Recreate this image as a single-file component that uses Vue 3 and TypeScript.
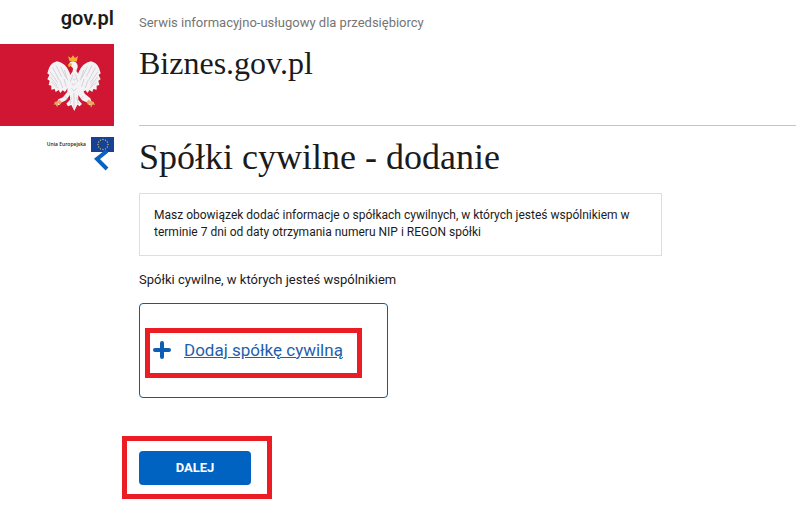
<script setup lang="ts">
const title = 'Spółki cywilne - dodanie'

// Centres of the twelve stars on the European flag
const stars = Array.from({ length: 12 }, (_, i) => {
  const angle = (i * Math.PI) / 6
  return { x: 12 + 5 * Math.sin(angle), y: 7.5 - 5 * Math.cos(angle) }
})
</script>

<template>
  <div class="page">
    <aside class="side">
      <a class="brand" href="#">gov.pl</a>
      <div class="emblem">
        <svg class="eagle" viewBox="21 15 162 171" role="img" aria-label="Godło Polski">
          <g fill="#f3f2f4">
            <path d="M94 96 L89 68 Q76 38 51 34 Q34 38 27 54 L22 70 L28 75 L22 88 L29 92 L26 105 L34 107 L34 119 L44 117 L47 126 L56 120 L61 129 L68 121 L75 126 L83 114 L90 120 Z" />
            <path d="M110 96 L115 68 Q128 38 153 34 Q170 38 177 54 L182 70 L176 75 L182 88 L175 92 L178 105 L170 107 L170 119 L160 117 L157 126 L148 120 L143 129 L136 121 L129 126 L121 114 L114 120 Z" />
            <path d="M87 44 Q88 33 101 34 Q114 38 113 52 L109 63 L121 80 L123 111 L135 132 L151 145 L158 164 L149 166 L143 158 L126 151 L115 135 L115 149 L126 162 L119 169 L112 164 L103 183 L94 165 L84 169 L79 161 L90 149 L90 135 L78 151 L63 158 L57 166 L48 162 L55 148 L69 142 L82 125 L82 87 L98 64 L99 55 L93 49 Z" />
          </g>
          <g fill="none" stroke="#c6c2c9" stroke-width="2">
            <path d="M48 46 L65 80 M38 53 L58 91 M30 65 L53 98 M31 81 L52 107 M34 96 L55 115 M62 50 L78 83 M73 60 L83 91 M60 91 L68 114 M72 87 L79 110" />
            <path d="M156 46 L139 80 M166 53 L146 91 M174 65 L151 98 M173 81 L152 107 M170 96 L149 115 M142 50 L126 83 M131 60 L121 91 M144 91 L136 114 M132 87 L125 110" />
            <path d="M99 73 L91 96 M106 73 L114 96 M99 85 L103 91 L108 85 M95 99 L100 106 L107 99 M95 115 L102 123 L110 115 M102 129 V174 M94 141 L91 161 M110 141 L115 161 M74 139 L82 146 M130 139 L122 146" />
          </g>
          <g fill="#f4ad32">
            <path d="M89 34 L84 19 L93 24 L99 16 L105 24 L114 18 L110 35 Q100 31 89 34 Z" />
            <path d="M84 43 L94 39 L96 46 L86 52 Z" />
          </g>
          <g fill="#eda758">
            <path d="M58 149 L65 155 L60 164 L54 160 L52 172 L46 163 L41 165 L45 155 L53 154 Z" />
            <path d="M146 149 L140 155 L144 165 L150 161 L153 173 L158 163 L165 166 L161 155 L153 154 Z" />
          </g>
        </svg>
      </div>
      <div class="union">
        <span>Unia Europejska</span>
        <svg class="eu" viewBox="0 0 23 15" aria-hidden="true">
          <rect width="23" height="15" fill="#164194" />
          <circle v-for="(s, i) in stars" :key="i" :cx="s.x" :cy="s.y" r=".65" fill="#c9c96c" />
        </svg>
      </div>
      <button class="back" type="button" aria-label="Wstecz">
        <svg viewBox="0 0 16 22" aria-hidden="true">
          <path d="M13 2 L3 10 L13 20" fill="none" stroke="#0863bd" stroke-width="4" />
        </svg>
      </button>
    </aside>

    <div class="content">
      <header class="header">
        <p class="tagline">Serwis informacyjno-usługowy dla przedsiębiorcy</p>
        <a class="site" href="#">Biznes.gov.pl</a>
      </header>
      <main>
        <h1>{{ title }}</h1>
        <p class="notice">
          Masz obowiązek dodać informacje o spółkach cywilnych, w których jesteś wspólnikiem w
          terminie 7 dni od daty otrzymania numeru NIP i REGON spółki
        </p>
        <h2>Spółki cywilne, w których jesteś wspólnikiem</h2>
        <div class="card">
          <a class="add" href="#">
            <svg viewBox="0 0 18 18" aria-hidden="true">
              <path d="M9 2 V16 M2 9 H16" fill="none" stroke="#0e5db5" stroke-width="4" stroke-linecap="round" />
            </svg>
            <span>Dodaj spółkę cywilną</span>
          </a>
        </div>
        <div class="actions">
          <button class="next" type="button">DALEJ</button>
        </div>
      </main>
    </div>
  </div>
</template>

<style>
body {
  background: #fff;
}
</style>

<style scoped>
.page {
  display: grid;
  grid-template-columns: 114px minmax(0, 1fr);
  column-gap: 25px;
  padding-bottom: 32px;
  font-family: Roboto, "Liberation Sans", sans-serif;
  color: #1b1b1b;
}
.side {
  display: flex;
  flex-direction: column;
}
.brand {
  height: 44px;
  padding-top: 6px;
  box-sizing: border-box;
  text-align: right;
  font-size: 20px;
  line-height: 24px;
  font-weight: 600;
  color: inherit;
  text-decoration: none;
}
.emblem {
  display: flex;
  justify-content: flex-end;
  padding: 11px 13px 14px 0;
  background: #d01632;
}
.eagle {
  width: 54px;
  height: 57px;
}
.union {
  display: flex;
  justify-content: flex-end;
  align-items: center;
  gap: 5px;
  margin-top: 11px;
  font-family: "Open Sans", sans-serif;
  font-size: 5px;
  font-weight: 600;
  line-height: 15px;
}
.eu {
  width: 23px;
  height: 15px;
}
.back {
  position: relative;
  align-self: flex-end;
  display: flex;
  margin: -3px 4px 0 0;
  padding: 0;
  border: 0;
  background: none;
}
.back svg {
  width: 16px;
  height: 22px;
}
.header {
  height: 125px;
  border-bottom: 1px solid #c6c6c6;
}
.tagline {
  margin: 0;
  padding: 15px 0 20px;
  font-size: 13px;
  line-height: 16px;
  color: #757575;
}
.site,
h1 {
  font-family: "Liberation Serif", serif;
  font-weight: 400;
  color: #1b1b1b;
}
.site {
  font-size: 32px;
  line-height: 24px;
  text-decoration: none;
}
h1 {
  margin: 10px 0 15px;
  font-size: 36px;
  line-height: 42px;
}
.notice {
  max-width: 523px;
  margin: 0 0 16px;
  padding: 13px 14px 14px;
  box-sizing: border-box;
  border: 1px solid #dedede;
  font-size: 12px;
  line-height: 17px;
}
h2 {
  margin: 0 0 15px;
  font-size: 13px;
  line-height: 16px;
  font-weight: 400;
}
.card {
  max-width: 249px;
  height: 95px;
  box-sizing: border-box;
  display: flex;
  align-items: center;
  padding: 0 0 2px 13px;
  border: 1px solid #146078;
  border-radius: 4px;
}
.add {
  position: relative;
  display: flex;
  align-items: center;
  gap: 13px;
  font-size: 17px;
  line-height: 20px;
  color: #1f5fae;
}
.add svg {
  width: 18px;
  height: 18px;
}
.add::after,
.actions::after {
  content: "";
  position: absolute;
  border: 5px solid #ec1c24;
  pointer-events: none;
}
.add::after {
  inset: -12px -19px -18px -8px;
}
.actions {
  position: relative;
  width: fit-content;
  margin-top: 53px;
}
.actions::after {
  inset: -15px -21px -14px -17px;
}
.next {
  display: block;
  width: 112px;
  height: 34px;
  padding: 0;
  border: 0;
  border-radius: 4px;
  background: #0062c1;
  color: #fff;
  font: 700 13px/16px Roboto, "Liberation Sans", sans-serif;
}
</style>
